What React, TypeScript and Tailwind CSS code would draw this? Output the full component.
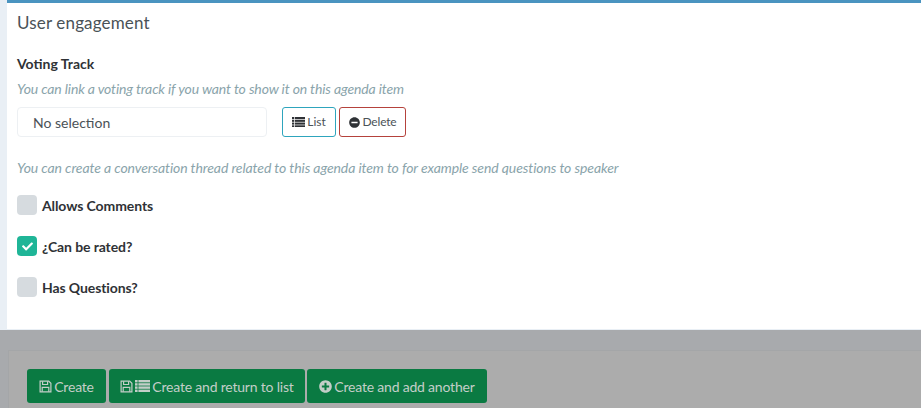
import { FaCheck, FaMinusCircle, FaPlusCircle } from "react-icons/fa";

const hints = "text-[#8aa4ab] italic text-[14px] leading-[20px]";

// font-awesome 4 style list: tiny bullets and tightly packed bars
function ListIcon({ size }: { size: number }) {
  return (
    <svg width={size} height={size * 0.8} viewBox="0 0 15 12" fill="currentColor">
      {[0, 3.2, 6.4, 9.6].map((y) => (
        <g key={y}>
          <rect x="0" y={y} width="2.6" height="2.4" />
          <rect x="3.4" y={y} width="11.6" height="2.4" />
        </g>
      ))}
    </svg>
  );
}

function SaveIcon() {
  return (
    <svg width="13" height="13" viewBox="0 0 13 13" fill="none" stroke="currentColor" strokeWidth="1.2">
      <path d="M1.1 1.1h8.6l2.2 2.2v8.6H1.1z" />
      <path d="M3.6 1.3v3.2h5V1.3" />
      <path d="M3.2 11.8V7.4h6.6v4.4" />
    </svg>
  );
}

function Toggle({ label, checked }: { label: string; checked?: boolean }) {
  return (
    <label className="flex items-center gap-[5px] h-[20px]">
      <span
        className={`flex items-center justify-center w-[20px] h-[20px] rounded-[4px] ${
          checked ? "bg-[#1fb597]" : "bg-[#d6dbdf]"
        }`}
      >
        {checked && <FaCheck size={11} className="text-white" />}
      </span>
      <span className="text-[14px] font-bold text-[#2f3236] tracking-[-0.1px]">{label}</span>
    </label>
  );
}

function GreenButton({ label, icons, width }: { label: string; icons: React.ReactNode; width: string }) {
  return (
    <button className={`flex items-center justify-center h-[34px] rounded-[3px] bg-[#0a7a42] text-[#c3cec8] text-[14px] ${width}`}>
      {icons}
      <span className="ml-[2px] tracking-[-0.2px]">{label}</span>
    </button>
  );
}

export default function App() {
  return (
    <div className="flex flex-col h-screen w-full overflow-hidden bg-[#eef2f7] font-['Lato',sans-serif]">
      <div className="pl-[7px] h-[330px] shrink-0 bg-[#e9eff5]">
        <div className="h-[329px] bg-white border-t-[3px] border-[#4a94c0] pl-[10px]">
          <h3 className="pt-[8px] text-[17px] leading-[24px] text-[#4a5257] tracking-[0.15px]">User engagement</h3>

          <div className="mt-[19px] text-[14px] leading-[20px] font-bold text-[#2f3236]">Voting Track</div>
          <p className={`mt-[5px] tracking-[-0.13px] ${hints}`}>You can link a voting track if you want to show it on this agenda item</p>

          <div className="flex items-center mt-[8px]">
            <div className="flex items-center w-[250px] h-[30px] pl-[15px] rounded-[4px] border border-[#edf0f3] text-[14px] text-[#4b5257]">
              No selection
            </div>
            <button className="flex items-center justify-center gap-[2px] ml-[15px] w-[54px] h-[30px] rounded-[3px] border border-[#2ea5bd] text-[12px] text-[#4b5257]">
              <span className="text-[#2f3236]">
                <ListIcon size={13} />
              </span>
              List
            </button>
            <button className="flex items-center justify-center gap-[3px] ml-[3px] w-[67px] h-[30px] rounded-[3px] border border-[#b5423c] text-[12px] text-[#4b5257] tracking-[-0.2px]">
              <FaMinusCircle size={11} className="text-[#2f3236]" />
              Delete
            </button>
          </div>

          <p className={`mt-[21px] tracking-[-0.09px] ${hints}`}>You can create a conversation thread related to this agenda item to for example send questions to speaker</p>

          <div className="flex flex-col gap-[21px] mt-[17px]">
            <Toggle label="Allows Comments" />
            <Toggle label="¿Can be rated?" checked />
            <Toggle label="Has Questions?" />
          </div>
        </div>
      </div>

      <div className="flex-1 bg-[#a8aaad] pt-[20px] pl-[8px]">
        <div className="h-full flex items-start gap-[3px] pt-[18px] pl-[18px] bg-[#acacac] border-t border-l border-[#a4a6a8]">
          <GreenButton label="Create" width="w-[79px]" icons={<SaveIcon />} />
          <GreenButton
            label="Create and return to list"
            width="w-[196px] -mr-[1px]"
            icons={
              <>
                <SaveIcon />
                <span className="ml-[2px]">
                  <ListIcon size={15} />
                </span>
              </>
            }
          />
          <GreenButton label="Create and add another" width="w-[180px]" icons={<FaPlusCircle size={13} />} />
        </div>
      </div>
    </div>
  );
}
